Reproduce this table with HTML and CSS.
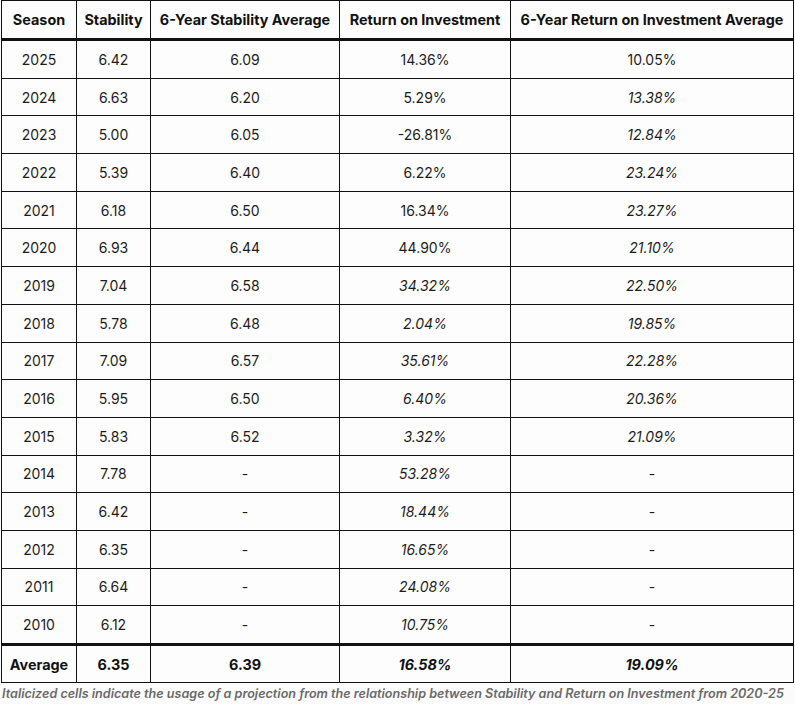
FILE: index.html
```html
<!DOCTYPE html>
<html>
<head>
<meta charset="utf-8">
<link rel="stylesheet" href="styles.css">
</head>
<body>
<div class="wrap">
<table class="tbl">
<colgroup>
<col class="c1"><col class="c2"><col class="c3"><col class="c4"><col class="c5">
</colgroup>
<thead>
<tr><th>Season</th><th>Stability</th><th>6-Year Stability Average</th><th>Return on Investment</th><th>6-Year Return on Investment Average</th></tr>
</thead>
<tbody>
<tr><td>2025</td><td>6.42</td><td>6.09</td><td>14.36%</td><td>10.05%</td></tr>
<tr><td>2024</td><td>6.63</td><td>6.20</td><td>5.29%</td><td class="it">13.38%</td></tr>
<tr><td>2023</td><td>5.00</td><td>6.05</td><td>-26.81%</td><td class="it">12.84%</td></tr>
<tr><td>2022</td><td>5.39</td><td>6.40</td><td>6.22%</td><td class="it">23.24%</td></tr>
<tr><td>2021</td><td>6.18</td><td>6.50</td><td>16.34%</td><td class="it">23.27%</td></tr>
<tr><td>2020</td><td>6.93</td><td>6.44</td><td>44.90%</td><td class="it">21.10%</td></tr>
<tr><td>2019</td><td>7.04</td><td>6.58</td><td class="it">34.32%</td><td class="it">22.50%</td></tr>
<tr><td>2018</td><td>5.78</td><td>6.48</td><td class="it">2.04%</td><td class="it">19.85%</td></tr>
<tr><td>2017</td><td>7.09</td><td>6.57</td><td class="it">35.61%</td><td class="it">22.28%</td></tr>
<tr><td>2016</td><td>5.95</td><td>6.50</td><td class="it">6.40%</td><td class="it">20.36%</td></tr>
<tr><td>2015</td><td>5.83</td><td>6.52</td><td class="it">3.32%</td><td class="it">21.09%</td></tr>
<tr><td>2014</td><td>7.78</td><td>-</td><td class="it">53.28%</td><td>-</td></tr>
<tr><td>2013</td><td>6.42</td><td>-</td><td class="it">18.44%</td><td>-</td></tr>
<tr><td>2012</td><td>6.35</td><td>-</td><td class="it">16.65%</td><td>-</td></tr>
<tr><td>2011</td><td>6.64</td><td>-</td><td class="it">24.08%</td><td>-</td></tr>
<tr><td>2010</td><td>6.12</td><td>-</td><td class="it">10.75%</td><td>-</td></tr>
</tbody>
<tfoot>
<tr><td>Average</td><td>6.35</td><td>6.39</td><td class="it">16.58%</td><td class="it">19.09%</td></tr>
</tfoot>
</table>
<p class="note">Italicized cells indicate the usage of a projection from the relationship between Stability and Return on Investment from 2020-25</p>
</div>
</body>
</html>
```
FILE: styles.css
```css
html, body {
  margin: 0;
  padding: 0;
  background: #fbfbfb;
}
body {
  font-family: Inter, "Noto Sans", sans-serif;
  color: #1c1c1c;
}
.wrap {
  padding-left: 1px;
  width: 792px;
}
.tbl {
  width: 792px;
  border-collapse: collapse;
  table-layout: fixed;
  font-size: 14px;
  background: #fdfdfd;
}
.c1 { width: 75px; }
.c2 { width: 74px; }
.c3 { width: 189px; }
.c4 { width: 171px; }
.c5 { width: 283px; }
.tbl th, .tbl td {
  border: 1px solid #111;
  text-align: center;
  padding: 0 4px;
  white-space: nowrap;
}
.tbl th {
  font-weight: 700;
  font-size: 14.4px;
  height: 37px;
  border-bottom: 3px solid #111;
  color: #111;
}
.tbl tbody td {
  height: 36.7px;
}
.tbl tfoot td {
  height: 36px;
  font-weight: 700;
  font-size: 14.4px;
  border-top: 3px solid #111;
  color: #111;
}
.tbl td.it {
  font-style: italic;
}
.note {
  margin: 0;
  padding: 3px 0 0 1px;
  font-size: 12.6px;
  font-style: italic;
  font-weight: 600;
  color: #6a6a6a;
  white-space: nowrap;
}
```
